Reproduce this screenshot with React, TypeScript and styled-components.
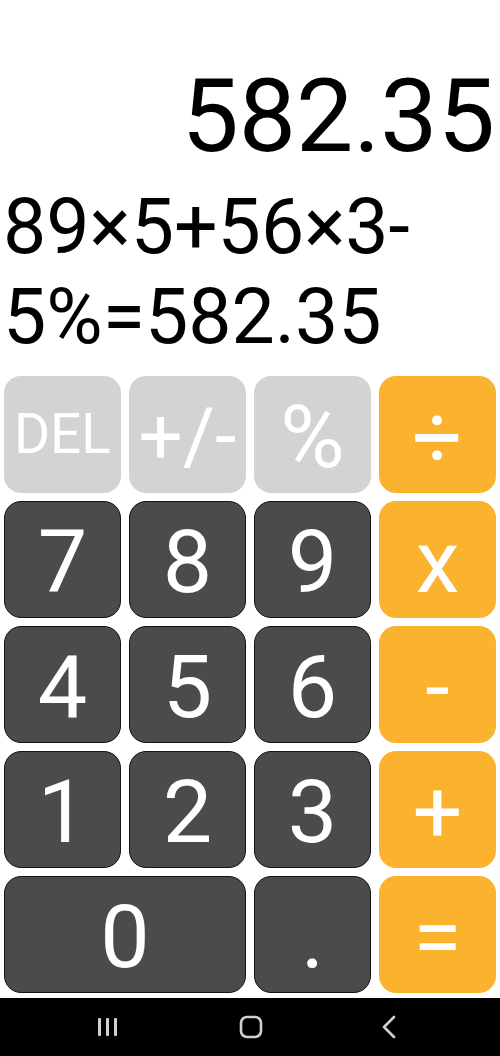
import React from "react";
import styled, { createGlobalStyle } from "styled-components";

const Global = createGlobalStyle`
  html, body { margin: 0; padding: 0; background: #fff; }
  body { font-family: Roboto, "Liberation Sans", sans-serif; }
`;

const Screen = styled.div`
  width: 500px;
  height: 1056px;
  display: flex;
  flex-direction: column;
  background: #fff;
  overflow: hidden;
`;

const Display = styled.div`
  flex: 1;
  display: flex;
  flex-direction: column;
  justify-content: flex-end;
  padding: 0 3px 14px 3px;
`;

const Result = styled.div`
  font-size: 102px;
  line-height: 120px;
  text-align: right;
  color: #000;
  margin-bottom: 6px;
  padding-right: 2px;
`;

const Expression = styled.div`
  font-size: 77px;
  line-height: 90px;
  color: #000;
  text-align: left;
  width: 420px;
`;

const Pad = styled.div`
  display: grid;
  grid-template-columns: repeat(4, 117px);
  grid-auto-rows: 117px;
  gap: 8px;
  padding: 0 4px;
`;

type Kind = "fn" | "num" | "op";

const Key = styled.div<{ $kind: Kind; $span?: number; $size?: number }>`
  grid-column: span ${(p) => p.$span ?? 1};
  display: flex;
  align-items: center;
  justify-content: center;
  border-radius: 17px;
  box-sizing: border-box;
  color: #fff;
  font-size: ${(p) => p.$size ?? 88}px;
  line-height: 1;
  padding-top: ${(p) => (p.$size && p.$size < 70 ? "0" : "5px")};
  background: ${(p) =>
    p.$kind === "fn" ? "#d3d3d3" : p.$kind === "op" ? "#fbb22f" : "#4b4b4b"};
  border: 1px solid
    ${(p) => (p.$kind === "num" ? "#151515" : "transparent")};
`;

const NavBar = styled.div`
  margin-top: 5px;
  height: 58px;
  background: #000;
  display: flex;
  align-items: center;
  justify-content: space-between;
  padding: 0 103px 0 96px;
`;

const NavIcon = styled.svg`
  display: block;
`;

const keys: { label: string; kind: Kind; span?: number; size?: number }[] = [
  { label: "DEL", kind: "fn", size: 55 },
  { label: "+/-", kind: "fn", size: 78 },
  { label: "%", kind: "fn" },
  { label: "÷", kind: "op" },
  { label: "7", kind: "num" },
  { label: "8", kind: "num" },
  { label: "9", kind: "num" },
  { label: "x", kind: "op" },
  { label: "4", kind: "num" },
  { label: "5", kind: "num" },
  { label: "6", kind: "num" },
  { label: "-", kind: "op" },
  { label: "1", kind: "num" },
  { label: "2", kind: "num" },
  { label: "3", kind: "num" },
  { label: "+", kind: "op" },
  { label: "0", kind: "num", span: 2 },
  { label: ".", kind: "num" },
  { label: "=", kind: "op" },
];

export default function App() {
  return (
    <>
      <Global />
      <Screen>
        <Display>
          <Result>582.35</Result>
          <Expression>
            89×5+56×3-
            <br />
            5%=582.35
          </Expression>
        </Display>
        <Pad>
          {keys.map((k, i) => (
            <Key key={i} $kind={k.kind} $span={k.span} $size={k.size}>
              {k.label}
            </Key>
          ))}
        </Pad>
        <NavBar>
          <NavIcon width="24" height="22" viewBox="0 0 24 22">
            <rect x="2" y="2" width="3" height="18" rx="1" fill="#d0d0d0" />
            <rect x="10" y="2" width="3" height="18" rx="1" fill="#d0d0d0" />
            <rect x="18" y="2" width="3" height="18" rx="1" fill="#d0d0d0" />
          </NavIcon>
          <NavIcon width="24" height="24" viewBox="0 0 24 24">
            <rect x="2" y="2" width="20" height="20" rx="6" fill="none" stroke="#d0d0d0" strokeWidth="2.6" />
          </NavIcon>
          <NavIcon width="16" height="24" viewBox="0 0 16 24">
            <path d="M13 2 L3 12 L13 22" fill="none" stroke="#d0d0d0" strokeWidth="2.6" strokeLinecap="round" strokeLinejoin="round" />
          </NavIcon>
        </NavBar>
      </Screen>
    </>
  );
}
